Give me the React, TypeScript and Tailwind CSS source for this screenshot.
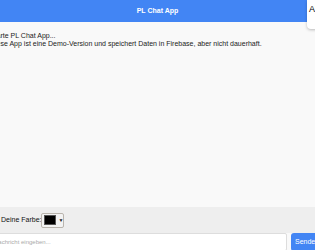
export default function App() {
    return (
        <div className="relative w-[315px] h-[250px] overflow-hidden flex flex-col bg-[#f9f9f9] font-['Liberation_Sans',Arial,sans-serif]">
            {/* Header */}
            <div className="h-[22px] shrink-0 bg-[#4285f4] text-white font-bold text-[7px] flex items-center justify-center">
                PL Chat App
            </div>

            {/* Messages */}
            <div className="flex-1 pt-[10px] -ml-[10px] text-[7px] leading-[8px] text-[#222] whitespace-nowrap">
                <div>Starte PL Chat App...</div>
                <div>Diese App ist eine Demo-Version und speichert Daten in Firebase, aber nicht dauerhaft.</div>
            </div>

            {/* Color picker bar */}
            <div className="h-[26px] shrink-0 bg-[#eeeeee] flex items-center pl-[1px] text-[7px] text-[#111]">
                <span>Deine Farbe:</span>
                <div className="w-[23px] h-[15px] border border-[#b9b4ad] rounded-[2px] bg-[#f3f3f3] flex items-center pl-[2px] gap-[2px]">
                    <div className="w-[12px] h-[10px] bg-black border border-[#555]" />
                    <span className="text-[5px] leading-none text-[#222]">▼</span>
                </div>
            </div>

            {/* Input row */}
            <div className="h-[17px] shrink-0 flex gap-[4px] -ml-[8px] -mr-[12px]">
                <div className="flex-1 h-[18px] bg-white border border-[#dddddd] rounded-[2px] flex items-center pl-[1px] text-[6px] text-[#aaa] whitespace-nowrap">
                    Nachricht eingeben...
                </div>
                <div className="w-[36px] h-[18px] shrink-0 bg-[#4285f4] rounded-[3px] text-white text-[7px] flex items-center pl-[4px] overflow-hidden whitespace-nowrap">
                    Senden
                </div>
            </div>

            {/* Overlay panel at the right edge */}
            <div className="absolute left-[307px] top-0 w-[40px] h-[29px] bg-white rounded-bl-[4px] shadow-[0_1px_3px_rgba(0,0,0,0.25)] pl-[2px] pt-[5px] text-[9px] leading-none text-black whitespace-nowrap">
                Aktive Nutzer
            </div>
        </div>
    );
}
